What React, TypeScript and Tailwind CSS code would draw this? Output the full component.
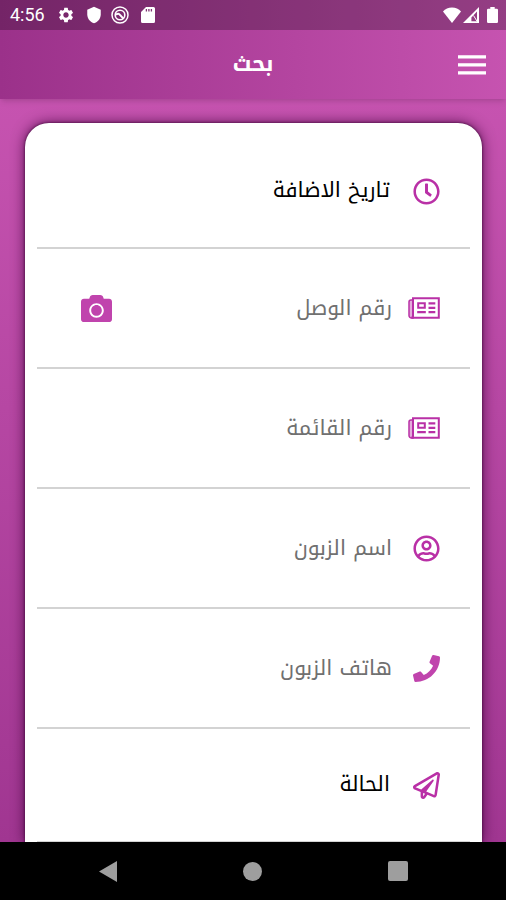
import type { ReactNode } from "react";
import { FaCamera, FaPhone, FaRegClock, FaRegPaperPlane, FaRegUserCircle } from "react-icons/fa";
import { MdSettings, MdShield } from "react-icons/md";

type FieldProps = {
  id: string;
  label: string;
  icon: ReactNode;
  children: ReactNode;
  compact?: boolean;
};

function NewspaperIcon() {
  return (
    <svg viewBox="0 0 32 22" className="h-[22px] w-8" fill="none" stroke="currentColor">
      <path d="M5 3H3a2 2 0 0 0-2 2v13.5A2.5 2.5 0 0 0 3.5 21H5z" fill="currentColor" fillOpacity="0.4" strokeWidth="1.5" />
      <path d="M5 1.2h25.8v19.6H3.5A2 2 0 0 0 5 18.8z" strokeWidth="2" />
      <path d="M10.2 6.2h6.6v4.6h-6.6z" strokeWidth="2" />
      <path d="M9.2 15.2h8.6M20.5 6.4h6.8M20.5 10.8h6.8M20.5 15.2h6.8" strokeWidth="2.2" />
    </svg>
  );
}

const TEXT_FIELDS = [
  { id: "receipt", label: "رقم الوصل", icon: <NewspaperIcon />, camera: true },
  { id: "list", label: "رقم القائمة", icon: <NewspaperIcon /> },
  { id: "customer", label: "اسم الزبون", icon: <FaRegUserCircle className="size-[27px]" /> },
  { id: "phone", label: "هاتف الزبون", icon: <FaPhone className="size-[27px] text-[#c044ad]" /> },
];

function StatusBar() {
  return (
    <div className="flex h-[30px] shrink-0 items-center justify-between bg-black/25 pr-2 pl-2.5 text-white" dir="ltr">
      <div className="flex items-center">
        <span className="w-[47px] font-[Roboto] text-lg leading-none">4:56</span>
        <MdSettings className="size-[18px]" />
        <MdShield className="ml-2.5 size-[18px]" />
        {/* ring with a swirl */}
        <svg viewBox="0 0 18 18" className="ml-2 size-[18px]" fill="none" stroke="currentColor">
          <circle cx="9" cy="9" r="8" strokeWidth="1.5" />
          <circle cx="9" cy="9" r="4.8" strokeWidth="1.6" />
          <path d="M5 8.8c1.6-1.4 3-1.2 4 .1l3.6 4" strokeWidth="2" />
        </svg>
        {/* sd card */}
        <svg viewBox="0 0 14 16" className="ml-3 h-4 w-3.5" fill="currentColor">
          <path d="M5 0h7.5A1.5 1.5 0 0 1 14 1.5v13a1.5 1.5 0 0 1-1.5 1.5h-11A1.5 1.5 0 0 1 0 14.5V5z" />
          <path d="M5.4 2v2.4M7.9 2v2.4M10.4 2v2.4" stroke="#7f3273" strokeWidth="1.3" />
        </svg>
      </div>
      <div className="flex items-center">
        <svg viewBox="0 0 20 16" className="h-4 w-5" fill="currentColor">
          <path d="M1 4.5C3.2 1.9 6.4.4 10 .4s6.8 1.5 9 4.1L10 16z" />
        </svg>
        <svg viewBox="0 0 16 16" className="ml-px size-4" fill="currentColor">
          <path fillRule="evenodd" d="M16 0v16H0zM14 4.6L8.4 10.4v3.8H14z" />
          <path d="M10.5 8.5L14 14.2" stroke="currentColor" strokeWidth="1" />
        </svg>
        <svg viewBox="0 0 11 16" className="ml-2 h-4 w-[11px]" fill="currentColor">
          <path d="M3.3 0h4.4v1.7h2.1a1.2 1.2 0 0 1 1.2 1.2v11.9a1.2 1.2 0 0 1-1.2 1.2H1.2A1.2 1.2 0 0 1 0 14.8V2.9a1.2 1.2 0 0 1 1.2-1.2h2.1z" />
        </svg>
      </div>
    </div>
  );
}

function Field({ id, label, icon, children, compact }: FieldProps) {
  return (
    <div
      className={`flex items-center gap-4 border-b-2 border-[#d3d3d3] px-[30px] text-[#b930a6] ${
        compact ? "h-[114px]" : "h-[120px]"
      }`}
    >
      <label htmlFor={id} className="flex w-8 shrink-0 justify-start" aria-label={label}>
        {icon}
      </label>
      {children}
    </div>
  );
}

export default function App() {
  return (
    <div
      dir="rtl"
      className="flex h-screen flex-col bg-black font-['Noto_Kufi_Arabic','Droid_Arabic_Kufi','DejaVu_Sans',sans-serif]"
    >
      <header className="relative z-10 shrink-0 bg-linear-to-r from-[#9b318a] to-[#c653b0] shadow-md">
        <StatusBar />
        <div className="grid h-[69px] grid-cols-[48px_1fr_48px] items-center px-2.5 text-white">
          <button type="button" aria-label="القائمة" className="flex justify-center">
            <svg viewBox="0 0 30 20" className="h-5 w-[30px]" fill="currentColor">
              <path d="M1 .2h28v3.4H1zM1 8.2h28v3.4H1zM1 16.2h28v3.4H1z" />
            </svg>
          </button>
          <h1 className="text-center text-[22px] font-bold">بحث</h1>
        </div>
      </header>

      <main className="min-h-0 flex-1 overflow-hidden bg-linear-to-b from-[#c653b0] to-[#a03691] pt-6 pr-6 pl-[25px]">
        <form className="min-h-full rounded-t-3xl bg-white px-3 pt-3 shadow-[0_0_3px_#3d0438,0_0_14px_#3d0438cc]">
          <Field id="date" label="تاريخ الاضافة" icon={<FaRegClock className="size-[27px]" />} compact>
            <button id="date" type="button" className="flex-1 px-0.5 text-right text-[21px] text-black">
              تاريخ الاضافة
            </button>
          </Field>

          {TEXT_FIELDS.map((f) => (
            <Field key={f.id} id={f.id} label={f.label} icon={f.icon}>
              <input
                id={f.id}
                type="text"
                placeholder={f.label}
                className="h-12 min-w-0 flex-1 text-[21px] text-black outline-none placeholder:text-[#707070]"
              />
              {f.camera && (
                <button type="button" aria-label="مسح الوصل" className="px-3.5">
                  <FaCamera className="size-[31px] text-[#c044ad]" />
                </button>
              )}
            </Field>
          ))}

          <Field id="status" label="الحالة" icon={<FaRegPaperPlane className="size-[27px]" />} compact>
            <select id="status" className="h-12 flex-1 appearance-none px-0.5 text-[21px] text-black outline-none">
              <option>الحالة</option>
            </select>
          </Field>
        </form>
      </main>

      <nav className="grid h-[58px] shrink-0 grid-cols-3 items-center bg-black px-9 text-[#9e9e9e]" dir="ltr">
        <button type="button" aria-label="رجوع" className="flex justify-center">
          <svg viewBox="0 0 18 21" className="h-[21px] w-[18px]" fill="currentColor">
            <path d="M18 0v21L0 10.5z" />
          </svg>
        </button>
        <button type="button" aria-label="الرئيسية" className="flex justify-center">
          <span className="size-[19px] rounded-full bg-current" />
        </button>
        <button type="button" aria-label="التطبيقات" className="flex justify-center">
          <span className="size-5 rounded-xs bg-current" />
        </button>
      </nav>
    </div>
  );
}
